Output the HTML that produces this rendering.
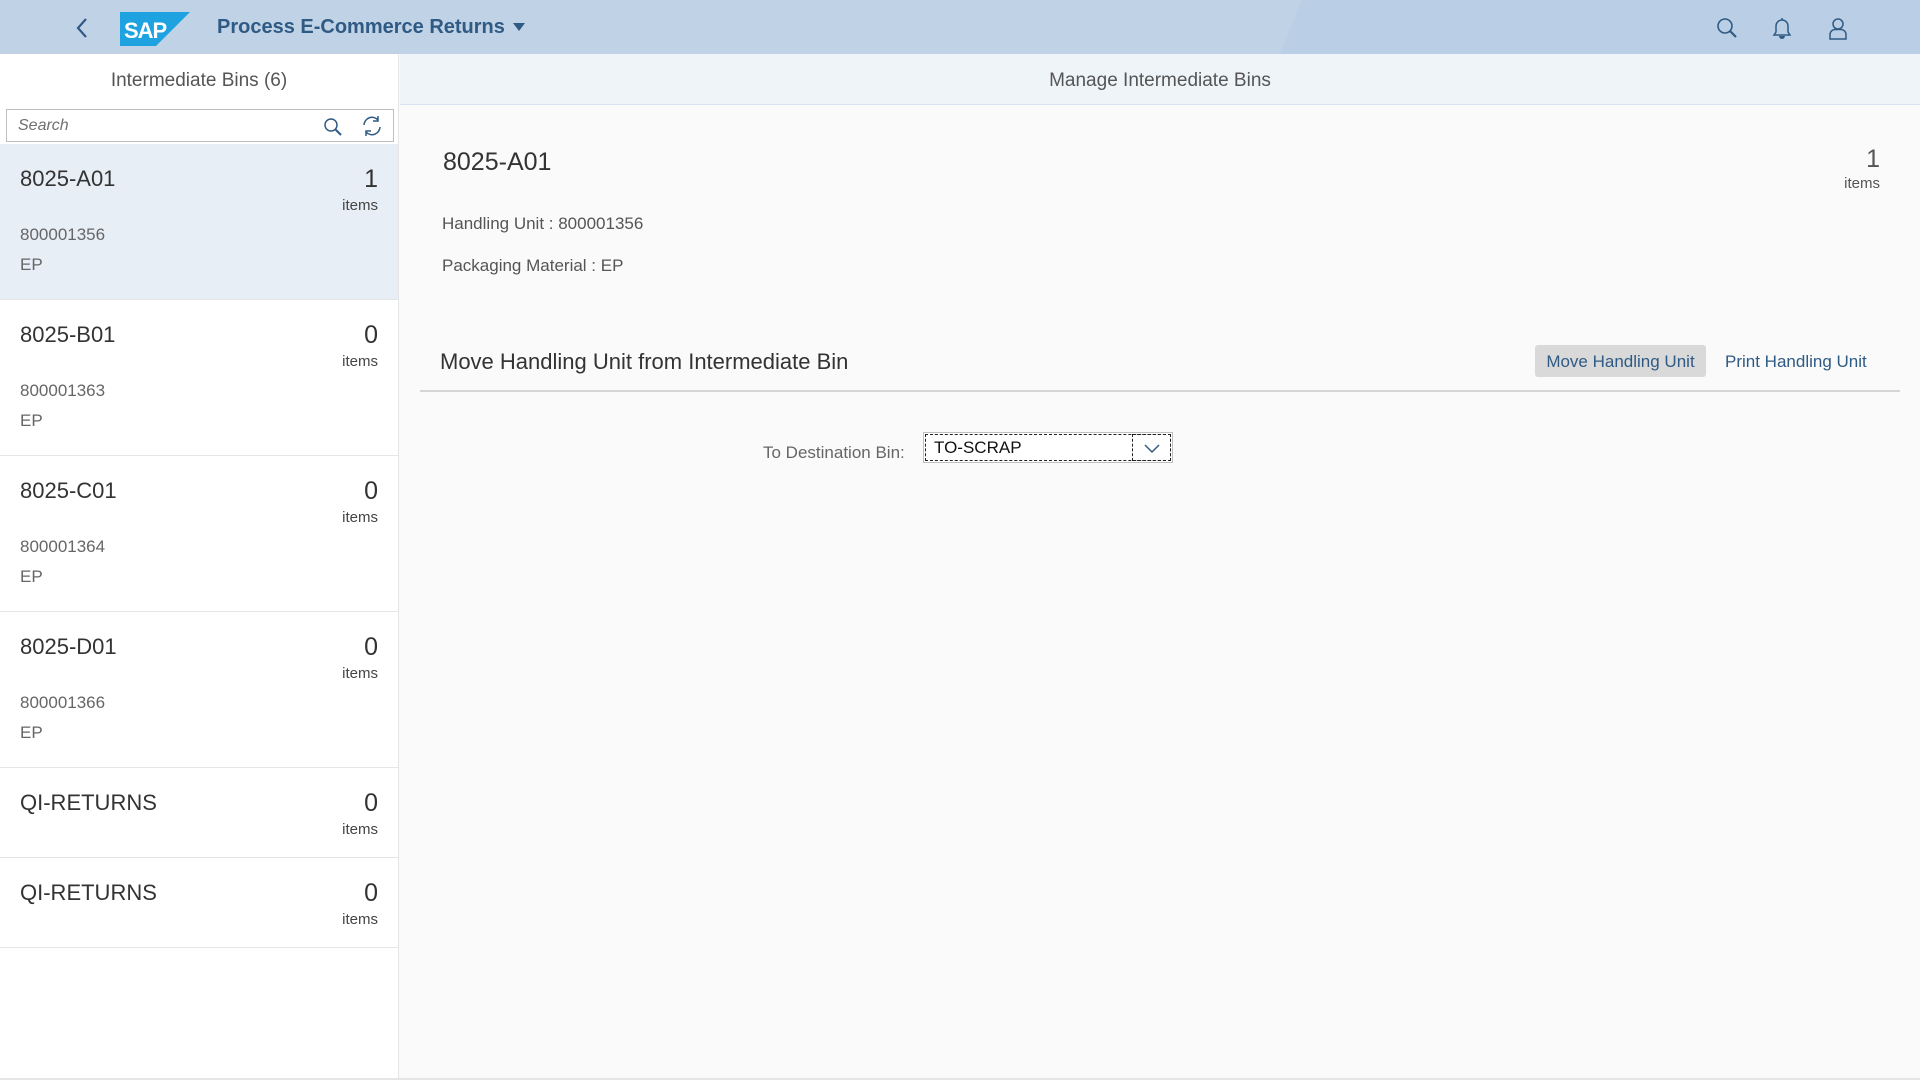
<!DOCTYPE html>
<html><head><meta charset="utf-8"><style>
*{box-sizing:border-box;margin:0;padding:0}
body{width:1920px;height:1080px;overflow:hidden;font-family:"Liberation Sans",sans-serif;background:#fafafa;position:relative;color:#333}
.hdr{position:absolute;left:0;top:0;width:1920px;height:54px;background:#bfd2e6;overflow:hidden}
.hdr .diag{position:absolute;left:1302px;top:0;width:700px;height:54px;background:#bacfe5;transform:skewX(-22deg);transform-origin:0 0}
.abs{position:absolute}
.left{position:absolute;left:0;top:54px;width:399px;height:1024px;background:#fff;border-right:1px solid #e5e5e5}
.lh{position:absolute;left:0;top:0;width:398px;height:51px;text-align:center;font-size:19px;line-height:53px;color:#555}
.search{position:absolute;left:6px;top:55px;width:388px;height:33px;border:1px solid #bfbfbf;background:#fff}
.search span{position:absolute;left:11px;top:7px;font-size:16px;font-style:italic;color:#707070}
.item{position:absolute;left:0;width:398px;border-bottom:1px solid #e5e5e5}
.item .t{position:absolute;left:20px;top:22px;font-size:22px;color:#333}
.item .n{position:absolute;right:20px;top:21px;font-size:25px;color:#333}
.item .u{position:absolute;right:20px;top:53px;font-size:15px;color:#444}
.item .a{position:absolute;left:20px;top:81px;font-size:17px;color:#666}
.item .b{position:absolute;left:20px;top:111px;font-size:17px;color:#666}
.rh{position:absolute;left:400px;top:54px;width:1520px;height:51px;background:#eff4f9;border-bottom:1px solid #d8e4f1;text-align:center;font-size:19px;line-height:53px;color:#555}
</style></head><body>
<div class="hdr"><div class="diag"></div>
<svg class="abs" style="left:74px;top:16px" width="16" height="24" viewBox="0 0 16 24"><path d="M12 3 L4 12 L12 21" fill="none" stroke="#2f5a84" stroke-width="2.2"/></svg>
<svg class="abs" style="left:120px;top:12px" width="70" height="34" viewBox="0 0 70 34"><polygon points="0,0 70,0 36,34 0,34" fill="#1ea3e0"/><text x="4" y="26" font-family="Liberation Sans" font-weight="bold" font-size="22" fill="#fff" letter-spacing="-1">SAP</text></svg>
<div class="abs" style="left:217px;top:16px;font-size:20px;font-weight:bold;color:#2f5a84;white-space:nowrap">Process E-Commerce Returns<svg style="margin-left:8px;vertical-align:2px" width="12" height="8"><polygon points="0,0 12,0 6,8" fill="#2f5a84"/></svg></div>
<svg class="abs" style="left:1716px;top:17px" width="22" height="22" viewBox="0 0 22 22"><circle cx="9" cy="9" r="7" fill="none" stroke="#2f5a84" stroke-width="1.6"/><path d="M14 14 L20 20" stroke="#2f5a84" stroke-width="2.2"/></svg>
<svg class="abs" style="left:1771px;top:16px" width="22" height="24" viewBox="0 0 22 24"><path d="M3 19 L5 16 V10 A6 6 0 0 1 17 10 V16 L19 19 Z M11 2 V4" fill="none" stroke="#2f5a84" stroke-width="1.5"/><path d="M8 20 A3 3 0 0 0 14 20 Z" fill="#2f5a84"/></svg>
<svg class="abs" style="left:1827px;top:17px" width="22" height="24" viewBox="0 0 22 24"><circle cx="11" cy="7" r="5" fill="none" stroke="#2f5a84" stroke-width="1.5"/><path d="M3 22 V17 A5 5 0 0 1 8 12.5 H14 A5 5 0 0 1 19 17 V22 Z" fill="none" stroke="#2f5a84" stroke-width="1.5"/></svg>
</div>

<div class="left">
<div class="lh">Intermediate Bins (6)</div>
<div class="search"><span>Search</span>
<svg class="abs" style="left:316px;top:7px" width="20" height="20" viewBox="0 0 20 20"><circle cx="8" cy="8" r="6" fill="none" stroke="#2f5a84" stroke-width="1.5"/><path d="M12.5 12.5 L18 18" stroke="#2f5a84" stroke-width="2"/></svg>
<svg class="abs" style="left:354px;top:5px" width="22" height="22" viewBox="0 0 22 22"><path d="M3 10 A8 8 0 0 1 17 5 M19 12 A8 8 0 0 1 5 17" fill="none" stroke="#2f5a84" stroke-width="1.5"/><path d="M17 1 V6 H12 M5 21 V16 H10" fill="none" stroke="#2f5a84" stroke-width="1.5"/></svg>
</div>
<div class="item" style="top:90px;height:156px;background:#e7eef6"><div class="t">8025-A01</div><div class="n">1</div><div class="u">items</div><div class="a">800001356</div><div class="b">EP</div></div>
<div class="item" style="top:246px;height:156px"><div class="t">8025-B01</div><div class="n">0</div><div class="u">items</div><div class="a">800001363</div><div class="b">EP</div></div>
<div class="item" style="top:402px;height:156px"><div class="t">8025-C01</div><div class="n">0</div><div class="u">items</div><div class="a">800001364</div><div class="b">EP</div></div>
<div class="item" style="top:558px;height:156px"><div class="t">8025-D01</div><div class="n">0</div><div class="u">items</div><div class="a">800001366</div><div class="b">EP</div></div>
<div class="item" style="top:714px;height:90px"><div class="t">QI-RETURNS</div><div class="n">0</div><div class="u">items</div></div>
<div class="item" style="top:804px;height:90px"><div class="t">QI-RETURNS</div><div class="n">0</div><div class="u">items</div></div>
</div>

<div class="rh">Manage Intermediate Bins</div>
<div class="abs" style="left:443px;top:148px;font-size:25px;color:#333">8025-A01</div>
<div class="abs" style="right:40px;top:145px;font-size:25px;color:#555">1</div>
<div class="abs" style="right:40px;top:175px;font-size:15px;color:#555">items</div>
<div class="abs" style="left:442px;top:214px;font-size:17px;color:#555">Handling Unit : 800001356</div>
<div class="abs" style="left:442px;top:256px;font-size:17px;color:#555">Packaging Material : EP</div>
<div class="abs" style="left:440px;top:349px;font-size:22px;color:#333">Move Handling Unit from Intermediate Bin</div>
<div class="abs" style="left:1535px;top:345px;width:171px;height:32px;background:#d9d9d9;border-radius:3px;font-size:17px;line-height:33px;text-align:center;color:#2f5a84">Move Handling Unit</div>
<div class="abs" style="left:1725px;top:352px;font-size:17px;color:#2f5a84">Print Handling Unit</div>
<div class="abs" style="left:420px;top:390px;width:1480px;height:2px;background:#d5d5d5"></div>
<div class="abs" style="left:763px;top:443px;font-size:17px;color:#666">To Destination Bin:</div>
<div class="abs" style="left:923px;top:432px;width:250px;height:31px;border:1px solid #bfbfbf;background:#fff">
<div class="abs" style="left:1px;top:1px;width:246px;height:27px;border:1px dashed #222"></div>
<div class="abs" style="left:10px;top:5px;font-size:17px;color:#111">TO-SCRAP</div>
<div class="abs" style="left:208px;top:1px;width:39px;height:27px;border:1px dashed #222"></div>
<svg class="abs" style="left:219px;top:9px" width="18" height="12"><path d="M2 3 L9 10 L16 3" fill="none" stroke="#2f5a84" stroke-width="1.5"/></svg>
</div>
<div class="abs" style="left:0;top:1078px;width:1920px;height:2px;background:#e5e5e5"></div>
</body></html>
